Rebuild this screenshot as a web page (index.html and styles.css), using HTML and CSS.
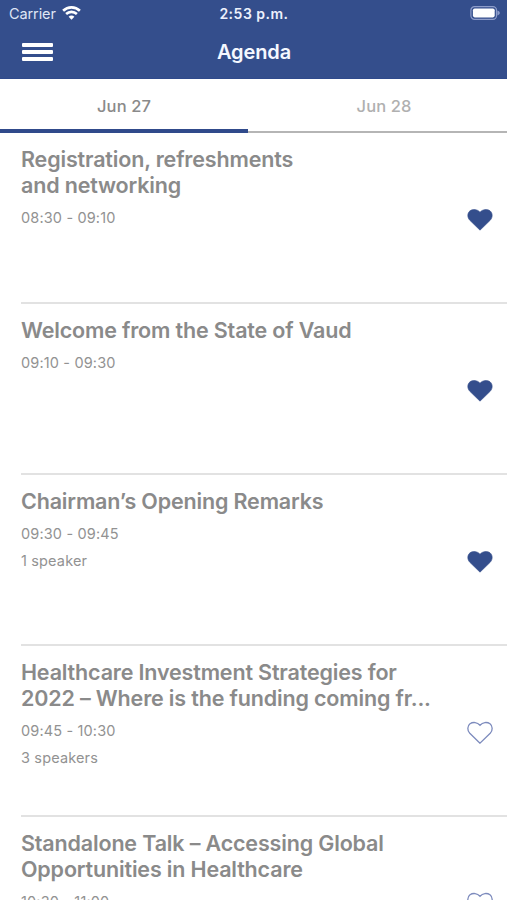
FILE: index.html
```html
<!DOCTYPE html>
<html lang="en">
<head>
<meta charset="utf-8">
<title>Agenda</title>
<link rel="stylesheet" href="styles.css">
</head>
<body>
<svg class="defs" width="0" height="0" aria-hidden="true">
  <symbol id="heart" viewBox="0 0 26 24">
    <path d="M13 22.2 L2.8 12.3 C0 9.3 0.3 4.9 3 2.8 C6 0.7 10.3 1.2 13 4.2 C15.7 1.2 20 0.7 23 2.8 C25.7 4.9 26 9.3 23.2 12.3 Z"/>
  </symbol>
</svg>
<header class="header">
  <div class="status">
    <div class="status-left">
      <span class="carrier">Carrier</span>
      <svg class="wifi" width="19" height="14" viewBox="0 0 19 14" fill="none" stroke="#fff" stroke-width="2.6">
        <path d="M1.1 4.8 C5.8 0.2 13.2 0.2 17.9 4.8"/>
        <path d="M4.1 8 C7.2 5.1 11.8 5.1 14.9 8"/>
        <path d="M9.5 13.7 L6.6 10.7 C8.2 9.2 10.8 9.2 12.4 10.7 Z" fill="#fff" stroke="none"/>
      </svg>
    </div>
    <span class="clock">2:53 p.m.</span>
    <div class="status-right">
      <svg width="31" height="14" viewBox="0 0 31 14">
        <rect x="0.9" y="0.7" width="25.6" height="12.6" rx="3.6" fill="none" stroke="#8e9dca" stroke-width="1.2"/>
        <rect x="2.9" y="2.4" width="21.8" height="9" rx="1.8" fill="#fff"/>
        <path d="M27.4 4.6 C30.6 5.4 30.6 8.6 27.4 9.4 Z" fill="#8e9dca"/>
      </svg>
    </div>
  </div>
  <div class="navbar">
    <div class="menu"><i></i><i></i><i></i></div>
    <h1 class="heading">Agenda</h1>
    <div></div>
  </div>
</header>
<nav class="tabs">
  <div class="tab tab-active">Jun 27</div>
  <div class="tab">Jun 28</div>
</nav>
<main class="list">
  <article class="row">
    <div class="info">
      <h2 class="title">Registration, refreshments<br>and networking</h2>
      <p class="meta">08:30 - 09:10</p>
    </div>
    <svg class="heart saved"><use href="#heart"/></svg>
  </article>
  <article class="row">
    <div class="info">
      <h2 class="title">Welcome from the State of Vaud</h2>
      <p class="meta">09:10 - 09:30</p>
    </div>
    <svg class="heart saved"><use href="#heart"/></svg>
  </article>
  <article class="row">
    <div class="info">
      <h2 class="title">Chairman’s Opening Remarks</h2>
      <p class="meta">09:30 - 09:45</p>
      <p class="meta speakers">1 speaker</p>
    </div>
    <svg class="heart saved"><use href="#heart"/></svg>
  </article>
  <article class="row">
    <div class="info">
      <h2 class="title">Healthcare Investment Strategies for<br>2022 – Where is the funding coming fr...</h2>
      <p class="meta">09:45 - 10:30</p>
      <p class="meta speakers">3 speakers</p>
    </div>
    <svg class="heart"><use href="#heart"/></svg>
  </article>
  <article class="row">
    <div class="info">
      <h2 class="title">Standalone Talk – Accessing Global<br>Opportunities in Healthcare</h2>
      <p class="meta">10:30 - 11:00</p>
    </div>
    <svg class="heart"><use href="#heart"/></svg>
  </article>
</main>
</body>
</html>
```
FILE: styles.css
```css
* { box-sizing: border-box; margin: 0; padding: 0; }
body {
  width: 507px;
  height: 900px;
  overflow: hidden;
  background: #fff;
  font-family: Inter, "Liberation Sans", sans-serif;
  color: #8a8a8a;
}
.defs { display: block; }
.header {
  height: 79px;
  background: #344e8c;
  border-bottom: 1px solid #2f4a8c;
  color: #fff;
}
.status, .navbar {
  display: grid;
  grid-template-columns: 1fr auto 1fr;
  align-items: center;
}
.status { height: 27px; padding: 0 6px 0 9px; }
.status-left { display: flex; align-items: center; gap: 6px; }
.wifi { margin-top: -2px; }
.carrier { font-size: 14.5px; color: #dfe5f5; letter-spacing: -0.1px; }
.clock { margin-left: -2px; font-size: 14px; font-weight: 600; letter-spacing: 0.5px; color: #edf1fc; }
.status-right { display: flex; justify-content: flex-end; margin-top: -1px; }
.navbar { height: 50px; padding: 0 22px; }
.menu { display: flex; flex-direction: column; gap: 3.4px; width: 31px; }
.menu i { height: 4px; background: #fff; border-radius: 1px; }
.heading { margin-left: 1px; font-size: 20px; font-weight: 600; letter-spacing: -0.1px; color: #f5f8ff; }
.tabs { display: flex; height: 54px; }
.tab {
  flex: 0 0 259px;
  height: 54px;
  padding-left: 13px;
  border-bottom: 2px solid #b5b5b5;
  line-height: 55px;
  text-align: center;
  font-size: 16.5px;
  font-weight: 500;
  letter-spacing: 0.1px;
  color: #b0b0b0;
}
.tab-active { flex-basis: 248px; padding-left: 0; border-bottom: 4px solid #304a8b; color: #8a8a8a; }
.row {
  display: flex;
  justify-content: space-between;
  height: 171px;
  margin-left: 21px;
  padding: 13px 14px 0 0;
  border-bottom: 2px solid #e2e2e2;
}
.info { white-space: nowrap; }
.title { font-size: 21.5px; line-height: 26px; font-weight: 600; letter-spacing: -0.16px; }
.meta { margin-top: 9.5px; font-size: 14.5px; line-height: 20px; letter-spacing: 0.15px; color: #929292; }
.speakers { margin-top: 7.5px; }
.heart {
  flex: none;
  width: 26px;
  height: 24px;
  margin-top: 62px;
  fill: none;
  stroke: #7d8bbd;
  stroke-width: 1.3;
}
.saved { fill: #344e8c; stroke: #344e8c; stroke-width: 0.6; }
```
